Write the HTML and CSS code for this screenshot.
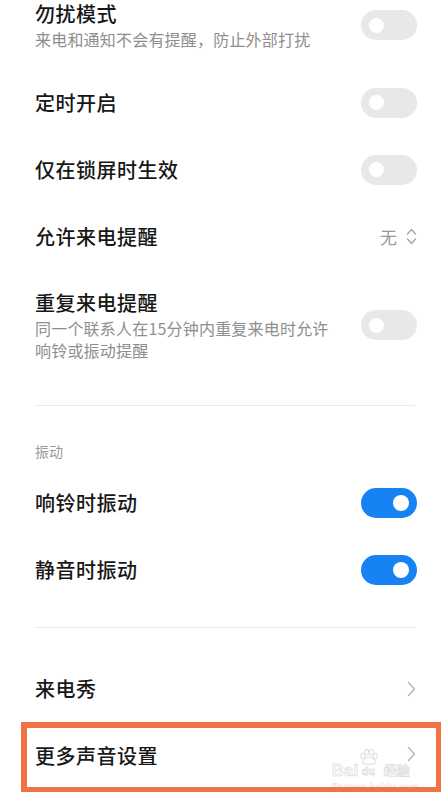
FILE: index.html
```html
<!DOCTYPE html>
<html lang="zh-CN">
<head>
<meta charset="utf-8">
<title>声音设置</title>
<link rel="stylesheet" href="styles.css">
</head>
<body>
<div class="page">
  <div class="row row-first">
    <div class="text">
      <div class="title">勿扰模式</div>
      <div class="sub">来电和通知不会有提醒，防止外部打扰</div>
    </div>
    <span class="toggle"></span>
  </div>
  <div class="row">
    <div class="text"><div class="title">定时开启</div></div>
    <span class="toggle"></span>
  </div>
  <div class="row">
    <div class="text"><div class="title">仅在锁屏时生效</div></div>
    <span class="toggle"></span>
  </div>
  <div class="row">
    <div class="text"><div class="title">允许来电提醒</div></div>
    <div class="value">
      <span class="value-text">无</span>
      <svg class="updown" width="11" height="19" viewBox="0 0 11 19"><path d="M1.5 7 L5.5 2.5 L9.5 7 M1.5 12 L5.5 16.5 L9.5 12" fill="none" stroke="#a8a8a8" stroke-width="1.4" stroke-linecap="round" stroke-linejoin="round"/></svg>
    </div>
  </div>
  <div class="row row-tall">
    <div class="text">
      <div class="title">重复来电提醒</div>
      <div class="sub">同一个联系人在15分钟内重复来电时允许<br>响铃或振动提醒</div>
    </div>
    <span class="toggle"></span>
  </div>

  <div class="divider divider-a"></div>

  <div class="section-head">振动</div>
  <div class="row">
    <div class="text"><div class="title">响铃时振动</div></div>
    <span class="toggle on"></span>
  </div>
  <div class="row">
    <div class="text"><div class="title">静音时振动</div></div>
    <span class="toggle on"></span>
  </div>

  <div class="divider divider-b"></div>

  <div class="row row-after-divider">
    <div class="text"><div class="title">来电秀</div></div>
    <svg class="chev" width="9" height="16" viewBox="0 0 9 16"><path d="M1.5 1.5 L7.5 8 L1.5 14.5" fill="none" stroke="#b5b5b5" stroke-width="1.4" stroke-linecap="round" stroke-linejoin="round"/></svg>
  </div>
  <div class="row row-marked">
    <div class="text"><div class="title">更多声音设置</div></div>
    <svg class="chev" width="9" height="16" viewBox="0 0 9 16"><path d="M1.5 1.5 L7.5 8 L1.5 14.5" fill="none" stroke="#b5b5b5" stroke-width="1.4" stroke-linecap="round" stroke-linejoin="round"/></svg>
    <span class="watermark">
      <svg class="wm-paw" width="20" height="16" viewBox="0 0 20 16"><g fill="#ffffff" stroke="#dadada" stroke-width="1"><ellipse cx="4" cy="7" rx="2.2" ry="2.8"/><ellipse cx="8" cy="3.2" rx="2.2" ry="2.8"/><ellipse cx="12.5" cy="3.2" rx="2.2" ry="2.8"/><ellipse cx="16.3" cy="7" rx="2.2" ry="2.8"/><path d="M10.2 8 C6 8 3.5 12 3.5 14 C3.5 15.5 16.8 15.5 16.8 14 C16.8 12 14.4 8 10.2 8 Z"/></g></svg>
      <span class="wm-main"><span class="wm-bai">Bai</span><span class="wm-du">du</span><span class="wm-jy">经验</span></span>
      <span class="wm-url">jingyan.baidu.com</span>
    </span>
    <span class="mark"></span>
  </div>
</div>
</body>
</html>
```

FILE: styles.css
```css
html, body {
  margin: 0;
  padding: 0;
  background: #ffffff;
}

body {
  font-family: "Noto Sans CJK SC", "Noto Sans", sans-serif;
  color: #1a1a1a;
  width: 447px;
  height: 806px;
  overflow: hidden;
}

.page {
  display: flex;
  flex-direction: column;
}

.row {
  display: flex;
  align-items: center;
  justify-content: space-between;
  height: 67px;
  padding: 0 30px 0 35px;
  box-sizing: border-box;
}

.row-first {
  height: auto;
  padding-bottom: 19px;
}

.row-tall {
  height: auto;
  padding-top: 19px;
  padding-bottom: 19px;
}

.text {
  display: flex;
  flex-direction: column;
}

.title {
  font-size: 20px;
  line-height: 28px;
  font-weight: 500;
  letter-spacing: 0.5px;
  color: #171717;
}

.sub {
  font-size: 16px;
  line-height: 22px;
  color: #8e8e8e;
  letter-spacing: 0.2px;
}

.toggle {
  position: relative;
  flex: none;
  width: 56px;
  height: 30px;
  border-radius: 15px;
  background: #e8e8e8;
}

.toggle::after {
  content: "";
  position: absolute;
  top: 7.5px;
  left: 8px;
  width: 15px;
  height: 15px;
  border-radius: 50%;
  background: #ffffff;
}

.toggle.on {
  background: #1682f3;
}

.toggle.on::after {
  left: auto;
  right: 8px;
  width: 16px;
  height: 16px;
  top: 7px;
}

.value {
  display: flex;
  align-items: center;
  gap: 9px;
}

.value-text {
  font-size: 17px;
  color: #9a9a9a;
}

.updown {
  display: block;
}

.chev {
  display: block;
  margin-right: 1px;
  margin-top: -4px;
}

.divider {
  height: 1px;
  background: #ebebeb;
  margin-left: 34px;
  margin-right: 32px;
}

.divider-a {
  margin-top: 25px;
}

.divider-b {
  margin-top: 24px;
}

.section-head {
  padding: 35px 35px 8px;
  font-size: 14px;
  line-height: 20px;
  color: #9a9a9a;
}

.row-after-divider {
  margin-top: 27px;
}

.row-after-divider .chev {
  margin-top: 0;
}

.row-marked {
  position: relative;
}

.mark {
  position: absolute;
  left: 21px;
  right: 6px;
  top: 0;
  bottom: -3px;
  border: 6px solid #f07245;
  border-right-width: 5px;
  border-bottom-width: 5px;
  pointer-events: none;
}

.watermark {
  position: absolute;
  left: 332px;
  top: 42px;
  display: flex;
  flex-direction: column;
  font-family: "Liberation Sans", "Noto Sans CJK SC", sans-serif;
  pointer-events: none;
}

.wm-paw {
  position: absolute;
  left: 27px;
  top: -15px;
  display: block;
}

.wm-main {
  display: flex;
  align-items: flex-end;
  height: 14px;
  line-height: 14px;
  font-weight: 700;
  color: #ffffff;
  -webkit-text-stroke: 0.6px #d4d4d4;
}

.wm-bai {
  font-size: 16px;
  letter-spacing: 0.5px;
}

.wm-du {
  font-size: 11px;
  margin: 0 9px 0 3px;
}

.wm-jy {
  font-size: 13px;
}

.wm-url {
  font-size: 9.5px;
  line-height: 10px;
  margin-top: 4px;
  color: #ffffff;
  font-weight: 700;
  -webkit-text-stroke: 0.4px #dcdcdc;
  letter-spacing: 0.2px;
}
```
